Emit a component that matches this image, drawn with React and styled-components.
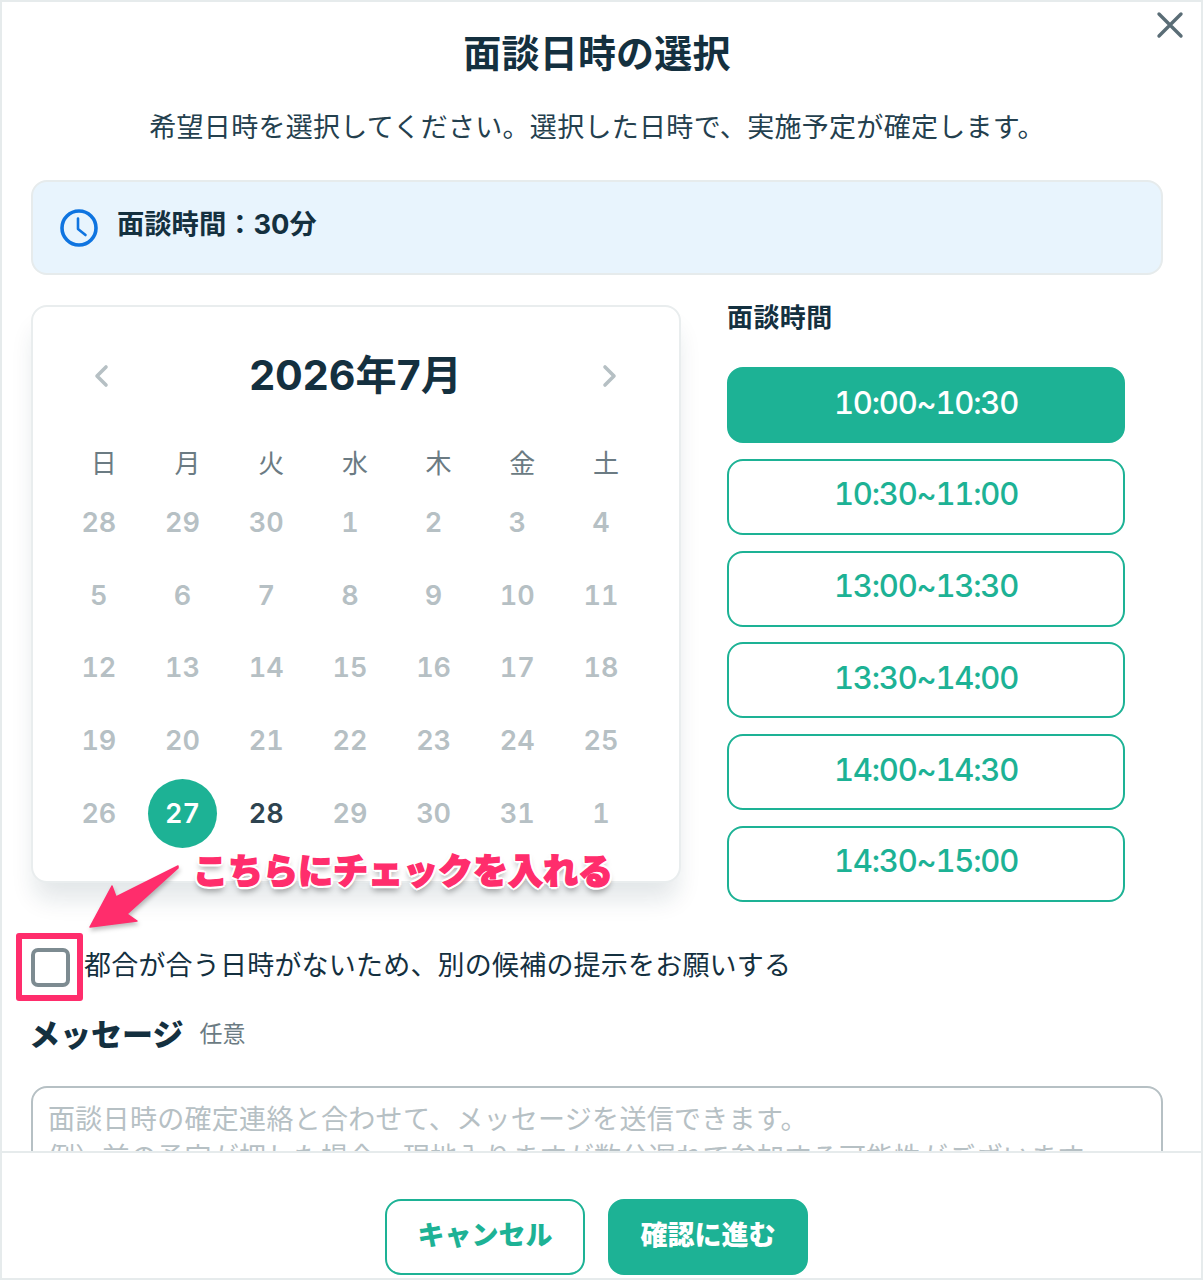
import React from "react";
import styled, { createGlobalStyle } from "styled-components";

const sans = `Inter, "Noto Sans CJK JP", sans-serif`;
const green = "#1db295";
const ink = "#14303f";
const pink = "#ff2d6c";

const Global = createGlobalStyle`
  html, body { margin: 0; padding: 0; background: #fff; }
  body { font-family: ${sans}; color: ${ink}; }
  * { box-sizing: border-box; }
`;

const Modal = styled.div`
  position: relative;
  width: 1203px;
  height: 1280px;
  overflow: hidden;
  display: flex;
  flex-direction: column;
  border: 2px solid #e6ebec;
  background: #fff;
`;

const Body = styled.div`
  flex: 1;
  min-height: 0;
  overflow: hidden;
  padding: 0 38px 0 29px;
`;

const CloseButton = styled.button`
  position: absolute;
  top: 8px;
  right: 16px;
  width: 30px;
  height: 30px;
  padding: 0;
  border: 0;
  background: none;
  color: #5a6d76;
`;

const Title = styled.h2`
  margin: 28px 0 0;
  font-size: 38px;
  line-height: 46px;
  font-weight: 700;
  letter-spacing: 0.2px;
  text-align: center;
`;

const Lead = styled.p`
  margin: 32px 0 0;
  font-size: 27px;
  line-height: 40px;
  letter-spacing: 0.3px;
  text-align: center;
  white-space: nowrap;
  color: #24404e;
`;

const DurationBar = styled.div`
  margin-top: 32px;
  height: 95px;
  display: flex;
  align-items: center;
  gap: 18px;
  padding: 0 26px;
  background: #e8f4fd;
  border: 2px solid #e6ebec;
  border-radius: 16px;
`;

const DurationText = styled.span`
  margin-bottom: 12px;
  font-size: 27.3px;
  font-weight: 700;
`;

const Columns = styled.div`
  margin-top: 30px;
  display: flex;
  align-items: flex-start;
  gap: 46px;
`;

const CalendarCard = styled.div`
  width: 650px;
  height: 578px;
  padding: 0 24px;
  background: #fff;
  border: 2px solid #e9edee;
  border-radius: 16px;
  box-shadow: 0 20px 24px -4px rgba(20, 48, 63, 0.12);
`;

const MonthRow = styled.div`
  height: 130px;
  display: flex;
  align-items: center;
  justify-content: space-between;
  padding: 0 37px 0 36px;
  color: #b6c0c4;
`;

const MonthLabel = styled.div`
  font-size: 41.2px;
  font-weight: 700;
  color: ${ink};
`;

const Grid = styled.div`
  display: grid;
  grid-template-columns: repeat(7, 83.7px);
`;

const WeekCell = styled.div`
  height: 49px;
  padding-left: 10px;
  display: flex;
  align-items: center;
  justify-content: center;
  font-size: 26px;
  color: #6b7b83;
`;

const DayCell = styled.div`
  height: 72.8px;
  display: flex;
  align-items: center;
  justify-content: center;
  font-size: 27px;
  font-weight: 600;
  font-variant-numeric: tabular-nums;
  color: ${(p) => (p.$today ? "#2e4450" : "#b6c0c4")};
`;

const SelectedDay = styled.span`
  width: 69px;
  height: 69px;
  border-radius: 50%;
  background: ${green};
  color: #fff;
  display: flex;
  align-items: center;
  justify-content: center;
`;

const SlotColumn = styled.div`
  width: 398px;
`;

const SlotHeading = styled.div`
  font-size: 26px;
  font-weight: 700;
  line-height: 26px;
  letter-spacing: 0.4px;
  margin-bottom: 36px;
`;

const SlotList = styled.div`
  display: flex;
  flex-direction: column;
  gap: 15.8px;
`;

const Slot = styled.div`
  height: 76px;
  display: flex;
  align-items: center;
  justify-content: center;
  padding-bottom: 6px;
  border: 2px solid ${green};
  border-radius: 16px;
  font-size: 31px;
  font-weight: 500;
  font-variant-numeric: tabular-nums;
  letter-spacing: -1.2px;
  color: ${(p) => (p.$active ? "#fff" : green)};
  background: ${(p) => (p.$active ? green : "#fff")};
`;

const CheckRow = styled.div`
  margin-top: 43px;
  display: flex;
  align-items: center;
  gap: 14px;
  font-size: 27px;
  line-height: 40px;
  letter-spacing: 0.2px;
`;

const CheckBox = styled.span`
  width: 39px;
  height: 39px;
  margin-top: 3px;
  border: 4px solid #7d8b91;
  border-radius: 7px;
  background: #fff;
`;

const MessageHead = styled.div`
  margin: 23px 0 0 -2px;
  display: flex;
  align-items: center;
  gap: 16px;
`;

const MessageTitle = styled.span`
  font-size: 31px;
  font-weight: 900;
`;

const Optional = styled.span`
  font-size: 23px;
  color: #6b7b83;
`;

const MessageBox = styled.div`
  margin-top: 31px;
  height: 130px;
  padding: 13px 15px;
  border: 2px solid #b6c0c4;
  border-radius: 16px;
  font-size: 27px;
  line-height: 38px;
  letter-spacing: 0.3px;
  color: #b6c0c4;
  white-space: nowrap;
`;

const Footer = styled.div`
  height: 127px;
  flex: none;
  display: flex;
  justify-content: center;
  gap: 23px;
  padding-top: 46px;
  padding-right: 10px;
  border-top: 2px solid #e6ebec;
  background: #fff;
`;

const FooterButton = styled.div`
  width: 200px;
  height: 76px;
  padding-bottom: 8px;
  display: flex;
  align-items: center;
  justify-content: center;
  border: 2px solid ${green};
  border-radius: 16px;
  font-size: 27px;
  font-weight: 800;
  color: ${(p) => (p.$primary ? "#fff" : green)};
  background: ${(p) => (p.$primary ? green : "#fff")};
`;

const Callout = styled.div`
  position: absolute;
  left: 191px;
  top: 845px;
  font-size: 35px;
  line-height: 48px;
  font-weight: 900;
  color: ${pink};
  white-space: nowrap;
  -webkit-text-stroke: 1.4px ${pink};
  text-shadow: 3px 0 0 #fff, -3px 0 0 #fff, 0 3px 0 #fff, 0 -3px 0 #fff,
    2px 2px 0 #fff, -2px 2px 0 #fff, 2px -2px 0 #fff, -2px -2px 0 #fff,
    0 5px 6px rgba(0, 0, 0, 0.4);
`;

const Arrow = styled.svg`
  position: absolute;
  left: 78px;
  top: 853px;
  filter: drop-shadow(1px 3px 2px rgba(0, 0, 0, 0.25));
`;

const Highlight = styled.div`
  position: absolute;
  left: 14px;
  top: 931px;
  width: 67px;
  height: 68px;
  border: 6px solid ${pink};
  border-radius: 3px;
`;

const ChevronIcon = styled.svg`
  margin-top: 8px;
`;

const ClockIcon = () => (
  <svg width="40" height="40" viewBox="0 0 40 40" fill="none" stroke="#0f74e0" strokeLinecap="round">
    <circle cx="20" cy="20" r="17" strokeWidth="3.6" />
    <path d="M19 10.5v10.5l7.5 6" strokeWidth="2.6" strokeLinejoin="round" />
  </svg>
);

const Chevron = ({ flip }) => (
  <ChevronIcon width="16" height="24" viewBox="0 0 16 24" fill="none" stroke="currentColor" strokeWidth="3.6" strokeLinecap="round" strokeLinejoin="round">
    <path d={flip ? "M3 3l9 9-9 9" : "M13 3l-9 9 9 9"} />
  </ChevronIcon>
);

const week = ["日", "月", "火", "水", "木", "金", "土"];
const days = [
  28, 29, 30, 1, 2, 3, 4,
  5, 6, 7, 8, 9, 10, 11,
  12, 13, 14, 15, 16, 17, 18,
  19, 20, 21, 22, 23, 24, 25,
  26, 27, 28, 29, 30, 31, 1,
];
const slots = ["10:00~10:30", "10:30~11:00", "13:00~13:30", "13:30~14:00", "14:00~14:30", "14:30~15:00"];

export default function App() {
  return (
    <>
      <Global />
      <Modal>
        <Body>
          <Title>面談日時の選択</Title>
          <Lead>希望日時を選択してください。選択した日時で、実施予定が確定します。</Lead>
          <DurationBar>
            <ClockIcon />
            <DurationText>面談時間：30分</DurationText>
          </DurationBar>
          <Columns>
            <CalendarCard>
              <MonthRow>
                <Chevron />
                <MonthLabel>2026年7月</MonthLabel>
                <Chevron flip />
              </MonthRow>
              <Grid>
                {week.map((w) => (
                  <WeekCell key={w}>{w}</WeekCell>
                ))}
                {days.map((d, i) => (
                  <DayCell key={i} $today={i === 30}>
                    {i === 29 ? <SelectedDay>{d}</SelectedDay> : d}
                  </DayCell>
                ))}
              </Grid>
            </CalendarCard>
            <SlotColumn>
              <SlotHeading>面談時間</SlotHeading>
              <SlotList>
                {slots.map((s, i) => (
                  <Slot key={s} $active={i === 0}>{s}</Slot>
                ))}
              </SlotList>
            </SlotColumn>
          </Columns>
          <CheckRow>
            <CheckBox />
            <span>都合が合う日時がないため、別の候補の提示をお願いする</span>
          </CheckRow>
          <MessageHead>
            <MessageTitle>メッセージ</MessageTitle>
            <Optional>任意</Optional>
          </MessageHead>
          <MessageBox>
            面談日時の確定連絡と合わせて、メッセージを送信できます。
            <br />
            例）前の予定が押した場合、現地入りますが数分遅れて参加する可能性がございます
          </MessageBox>
        </Body>
        <Footer>
          <FooterButton>キャンセル</FooterButton>
          <FooterButton $primary>確認に進む</FooterButton>
        </Footer>
        <Arrow width="110" height="80" viewBox="0 0 110 80">
          <path d="M98 11 L36 42 L32 31 L10 72 L57 66 L47 59 L98 13 Z" fill={pink} stroke={pink} strokeWidth="1.5" strokeLinejoin="round" />
        </Arrow>
        <Callout>こちらにチェックを入れる</Callout>
        <Highlight />
        <CloseButton aria-label="close">
          <svg width="30" height="30" viewBox="0 0 30 30" stroke="currentColor" strokeWidth="3.4" strokeLinecap="round">
            <path d="M4 4l22 22M26 4L4 26" />
          </svg>
        </CloseButton>
      </Modal>
    </>
  );
}
